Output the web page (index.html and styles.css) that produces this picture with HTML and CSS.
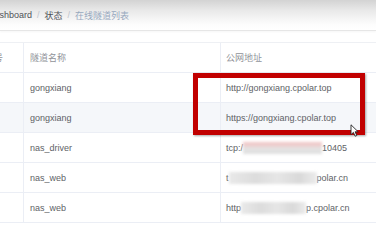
FILE: index.html
```html
<!DOCTYPE html>
<html lang="zh">
<head>
    <meta charset="UTF-8">
    <meta name="viewport" content="width=device-width, initial-scale=1.0">
    <title>在线隧道列表 - cpolar</title>
    <link rel="stylesheet" href="styles.css">
</head>
<body>

    <div class="navbar">
        <nav class="breadcrumb">
            <span class="crumb">Dashboard</span>
            <span class="sep">/</span>
            <span class="crumb">状态</span>
            <span class="sep">/</span>
            <span class="crumb current">在线隧道列表</span>
        </nav>
    </div>

    <div class="tunnel-table">
        <div class="row head">
            <div class="cell first">序号</div>
            <div class="cell">隧道名称</div>
            <div class="cell">公网地址</div>
        </div>
        <div class="row">
            <div class="cell first"></div>
            <div class="cell">gongxiang</div>
            <div class="cell">http://gongxiang.cpolar.top</div>
        </div>
        <div class="row hover">
            <div class="cell first"></div>
            <div class="cell">gongxiang</div>
            <div class="cell">https://gongxiang.cpolar.top</div>
        </div>
        <div class="row">
            <div class="cell first"></div>
            <div class="cell">nas_driver</div>
            <div class="cell">tcp:/<span class="smudge smudge-tcp"></span>10405</div>
        </div>
        <div class="row">
            <div class="cell first"></div>
            <div class="cell">nas_web</div>
            <div class="cell">t<span class="smudge smudge-web"></span>polar.cn</div>
        </div>
        <div class="row">
            <div class="cell first"></div>
            <div class="cell">nas_web</div>
            <div class="cell">http<span class="smudge smudge-web2"></span>p.cpolar.cn</div>
        </div>
    </div>

    <!-- marca roja sobre las dos direcciones -->
    <div class="highlight-box"></div>

    <svg class="cursor" width="9" height="13" viewBox="0 0 9 13">
        <path d="M1 0.8 L1 10.6 L3.4 8.4 L5.1 12.2 L6.8 11.5 L5.1 7.8 L8.2 7.8 Z" fill="#fff" stroke="#222" stroke-width="0.9" stroke-linejoin="round"/>
    </svg>

</body>
</html>
```

FILE: styles.css
```css
body {
    margin: 0;
    width: 376px;
    height: 241px;
    overflow: hidden;
    position: relative;
    background-color: #fff;
    font-family: "Liberation Sans", Arial, "Noto Sans CJK SC", sans-serif;
    font-size: 9px;
    color: #606266;
}

.navbar {
    height: 30px;
    display: flex;
    align-items: center;
    background: linear-gradient(to bottom, #d3d3d3 0%, #e9e9e9 35%, #fcfcfc 80%, #fff 100%);
    border-bottom: 1px solid #e6e6e6;
    box-shadow: 0 1px 2px rgba(0, 0, 0, 0.04);
}

.breadcrumb {
    display: flex;
    align-items: center;
    margin-left: -12px;
    white-space: nowrap;
}

.crumb {
    color: #505257;
}

.crumb.current {
    color: #97a8be;
}

.sep {
    color: #c0c4cc;
    margin: 0 5px;
}

.tunnel-table {
    margin-top: 11px;
    border-top: 1px solid #eef0f4;
}

.row {
    display: grid;
    grid-template-columns: 23px 197px 1fr;
    height: 30px;
    box-sizing: border-box;
    border-bottom: 1px solid #ebeef5;
}

.row.hover {
    background-color: #f5f7fa;
}

.cell {
    display: flex;
    align-items: center;
    padding-left: 6px;
    border-left: 1px solid #ebeef5;
    white-space: nowrap;
}

.cell.first {
    border-left: none;
    padding-left: 0;
    padding-right: 20px;
    justify-content: flex-end;
}

.head .cell {
    color: #909399;
}

.row .cell:last-child {
    padding-left: 5px;
}

.smudge {
    display: inline-block;
    height: 12px;
    filter: blur(1.6px);
    background: linear-gradient(to right, #e9e9e9, #dcdcdc 30%, #e6e6e6 55%, #d9d9d9 80%, #ececec);
}

.smudge-tcp {
    width: 79px;
    background: linear-gradient(to bottom, #f1c4c4 0%, #eccfcf 30%, #e3e3e3 55%, #dedede 100%);
}

.smudge-web {
    width: 88px;
}

.smudge-web2 {
    width: 65px;
}

.highlight-box {
    position: absolute;
    left: 193px;
    top: 73px;
    width: 172px;
    height: 62px;
    box-sizing: border-box;
    border: 5px solid #c10000;
    box-shadow: 1px 1px 2px rgba(0, 0, 0, 0.35);
}

.cursor {
    position: absolute;
    left: 350px;
    top: 124px;
}
```
